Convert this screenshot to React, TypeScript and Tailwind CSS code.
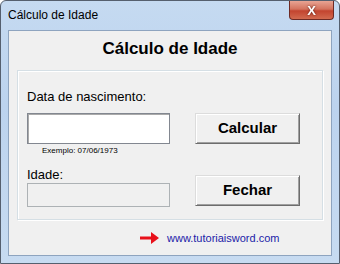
export default function App() {
  return (
    <div
      className="w-[340px] h-[264px] flex flex-col bg-[linear-gradient(180deg,#c5daf1_0%,#bcd3ee_40%,#c7dbf1_100%)] border border-[#555f6e] rounded-t-[6px] overflow-hidden"
      style={{ fontFamily: '"Liberation Sans", Arial, sans-serif' }}
    >
      {/* Title bar */}
      <div className="h-[29px] flex items-start justify-between shrink-0">
        <span className="pl-[7px] pt-[8px] text-[12px] text-black leading-none">Cálculo de Idade</span>
        <div className="mr-[5px] w-[45px] h-[19px] rounded-b-[4px] border border-t-0 border-[#6d2a24] bg-[linear-gradient(180deg,#e8a493_0%,#d4735e_45%,#c3442f_55%,#d26a4f_100%)] flex items-center justify-center">
          <span className="text-white font-bold text-[13px] leading-none drop-shadow-[0_0_1px_#5a1a10]">X</span>
        </div>
      </div>

      {/* Client area */}
      <div className="flex-1 mx-[7px] mb-[7px] bg-[#f0f0f0] border border-[#8ea4bf] flex flex-col">
        <div className="text-center pt-[7px] text-[17px] font-bold text-black leading-[22px]">Cálculo de Idade</div>

        <div className="mt-[10px] mx-[8px] h-[150px] border border-[#d5dfe5] shadow-[inset_1px_1px_0_#fff,1px_1px_0_#fff] flex">
          <div className="flex flex-col pl-[9px] pt-[18px] w-[160px]">
            <span className="text-[13px] leading-[15px] text-black">Data de nascimento:</span>
            <div className="mt-[9px] w-[143px] h-[31px] bg-white border border-[#828790] shadow-[inset_1px_1px_0_#aaa]" />
            <span className="mt-[2px] pl-[15px] text-[8px] leading-[10px] text-black">Exemplo: 07/06/1973</span>
            <span className="mt-[11px] text-[13px] leading-[15px] text-black">Idade:</span>
            <div className="mt-[1px] w-[143px] h-[24px] bg-[#f0f0f0] border border-[#adb2b5]" />
          </div>
          <div className="flex flex-col pl-[17px] pt-[42px]">
            <button className="w-[105px] h-[31px] bg-[#f0f0f0] border border-[#dcdcdc] border-r-[#6d6d6d] border-b-[#6d6d6d] shadow-[inset_1px_1px_0_#fff,inset_-1px_-1px_0_#a0a0a0] text-[15px] font-bold text-black">
              Calcular
            </button>
            <button className="mt-[31px] w-[105px] h-[31px] bg-[#f0f0f0] border border-[#dcdcdc] border-r-[#6d6d6d] border-b-[#6d6d6d] shadow-[inset_1px_1px_0_#fff,inset_-1px_-1px_0_#a0a0a0] text-[15px] font-bold text-black">
              Fechar
            </button>
          </div>
        </div>

        <div className="mt-[12px] flex items-center pl-[131px]">
          <svg width="20" height="12" viewBox="0 0 20 12">
            <path d="M0 4.5 H11 V0 L19 6 L11 12 V7.5 H0 Z" fill="#e8101a" />
          </svg>
          <span className="ml-[7px] text-[11px] text-[#1c1ca8] leading-none">www.tutoriaisword.com</span>
        </div>
      </div>
    </div>
  )
}
